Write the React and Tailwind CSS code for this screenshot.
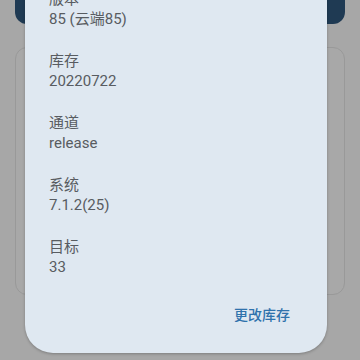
import React from 'react';

const rows = [
  { label: '版本', value: '85 (云端85)' },
  { label: '库存', value: '20220722' },
  { label: '通道', value: 'release' },
  { label: '系统', value: '7.1.2(25)' },
  { label: '目标', value: '33' },
];

const App = () => {
  return (
    <div
      className="relative w-[360px] h-[360px] overflow-hidden bg-[#a7a7a7]"
      style={{ fontFamily: "Roboto, 'Noto Sans CJK SC', sans-serif" }}
    >
      {/* page behind the scrim */}
      <div className="flex flex-col px-[15px] gap-[23px] mt-[-40px]">
        <div className="h-[64px] rounded-[12px] bg-[#1f3a53]" />
        <div className="h-[248px] rounded-[12px] border border-[#999999] bg-[#a8a8a8]" />
      </div>

      {/* dialog */}
      <div className="absolute left-[25px] top-[-35px] w-[302px] h-[388px] rounded-[28px] bg-[#dfe8f1] shadow-[0_1px_3px_rgba(0,0,0,0.25)] flex flex-col">
        <div className="flex flex-col gap-[22px] pt-[24px] px-[24px]">
          {rows.map((r) => (
            <div key={r.label} className="flex flex-col text-[15px] leading-[20px] text-[#585c61]">
              <span>{r.label}</span>
              <span>{r.value}</span>
            </div>
          ))}
        </div>
        <div className="mt-auto mb-[28px] flex justify-end pr-[37px]">
          <button className="text-[14px] leading-[20px] text-[#2f72ac] font-medium">更改库存</button>
        </div>
      </div>
    </div>
  );
};

export default App;
